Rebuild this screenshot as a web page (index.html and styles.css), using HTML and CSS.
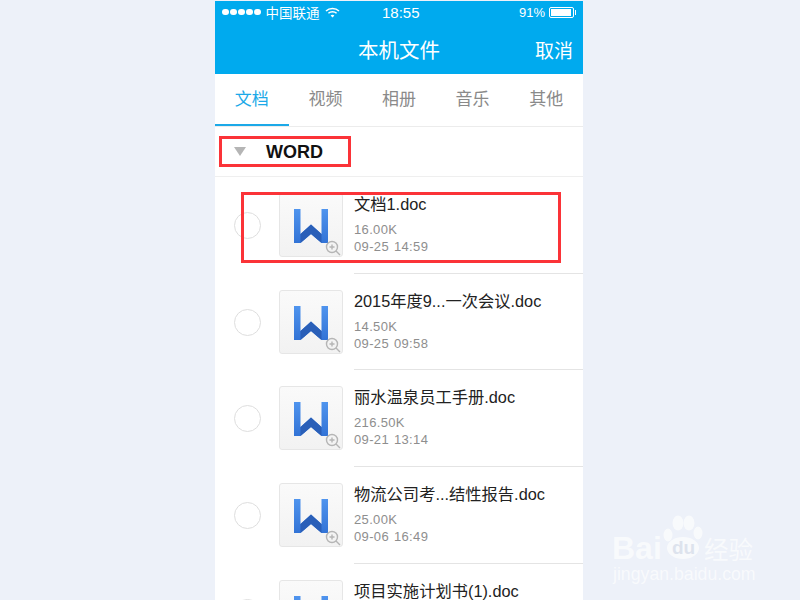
FILE: index.html
```html
<!DOCTYPE html>
<html lang="zh-CN">
<head>
    <meta charset="UTF-8">
    <title>本机文件</title>
    <link rel="stylesheet" href="styles.css">
</head>
<body>
    <svg class="defs" width="0" height="0">
        <defs>
            <linearGradient id="leg" x1="0" y1="0" x2="0" y2="1">
                <stop offset="0" stop-color="#4f94ee"/>
                <stop offset="1" stop-color="#3273d6"/>
            </linearGradient>
        </defs>
    </svg>

    <div class="phone">
        <div class="top">
            <div class="status">
                <div class="carrier">
                    <span class="dots"><i></i><i></i><i></i><i></i><i></i></span>
                    <span>中国联通</span>
                    <svg class="wifi" width="15" height="11" viewBox="0 0 15 11">
                        <path d="M1 4 C4.5 0.6 10.5 0.6 14 4" fill="none" stroke="#fff" stroke-width="1.5"/>
                        <path d="M3.4 6.3 C5.6 4.2 9.4 4.2 11.6 6.3" fill="none" stroke="#fff" stroke-width="1.5"/>
                        <path d="M5.6 8.4 C6.7 7.4 8.3 7.4 9.4 8.4 L7.5 10.4 Z" fill="#fff"/>
                    </svg>
                </div>
                <div class="time">18:55</div>
                <div class="power">
                    <span>91%</span>
                    <span class="battery"><span class="level"></span></span>
                </div>
            </div>
            <div class="nav">
                <div class="nav-title">本机文件</div>
                <div class="nav-cancel">取消</div>
            </div>
        </div>

        <div class="tabs">
            <div class="tab active">文档</div>
            <div class="tab">视频</div>
            <div class="tab">相册</div>
            <div class="tab">音乐</div>
            <div class="tab">其他</div>
        </div>

        <div class="group">
            <span class="arrow"></span>
            <span class="group-name">WORD</span>
            <div class="mark mark-group"></div>
        </div>

        <div class="row">
            <span class="radio"></span>
            <div class="thumb">
                <svg class="w" width="34" height="34" viewBox="0 0 34 34"><path d="M0 0H6.5V25L17 15.5L27.5 25V0H34V34H27.5L17 25L6.5 34H0Z" fill="url(#leg)"/><path d="M6.5 25L17 15.5L27.5 25V34L17 25L6.5 34Z" fill="#2a5fb8"/></svg>
                <svg class="zoom" width="16" height="16" viewBox="0 0 16 16"><circle cx="7" cy="7" r="5.5" fill="none" stroke="#b5b5b5" stroke-width="1.4"/><path d="M4.5 7H9.5M7 4.5V9.5M11 11L15 15" stroke="#b5b5b5" stroke-width="1.4" fill="none"/></svg>
            </div>
            <div class="info">
                <div class="name">文档1.doc</div>
                <div class="meta">16.00K</div>
                <div class="meta">09-25 14:59</div>
            </div>
            <div class="mark mark-row"></div>
        </div>

        <div class="row">
            <span class="radio"></span>
            <div class="thumb">
                <svg class="w" width="34" height="34" viewBox="0 0 34 34"><path d="M0 0H6.5V25L17 15.5L27.5 25V0H34V34H27.5L17 25L6.5 34H0Z" fill="url(#leg)"/><path d="M6.5 25L17 15.5L27.5 25V34L17 25L6.5 34Z" fill="#2a5fb8"/></svg>
                <svg class="zoom" width="16" height="16" viewBox="0 0 16 16"><circle cx="7" cy="7" r="5.5" fill="none" stroke="#b5b5b5" stroke-width="1.4"/><path d="M4.5 7H9.5M7 4.5V9.5M11 11L15 15" stroke="#b5b5b5" stroke-width="1.4" fill="none"/></svg>
            </div>
            <div class="info">
                <div class="name">2015年度9...一次会议.doc</div>
                <div class="meta">14.50K</div>
                <div class="meta">09-25 09:58</div>
            </div>
        </div>

        <div class="row">
            <span class="radio"></span>
            <div class="thumb">
                <svg class="w" width="34" height="34" viewBox="0 0 34 34"><path d="M0 0H6.5V25L17 15.5L27.5 25V0H34V34H27.5L17 25L6.5 34H0Z" fill="url(#leg)"/><path d="M6.5 25L17 15.5L27.5 25V34L17 25L6.5 34Z" fill="#2a5fb8"/></svg>
                <svg class="zoom" width="16" height="16" viewBox="0 0 16 16"><circle cx="7" cy="7" r="5.5" fill="none" stroke="#b5b5b5" stroke-width="1.4"/><path d="M4.5 7H9.5M7 4.5V9.5M11 11L15 15" stroke="#b5b5b5" stroke-width="1.4" fill="none"/></svg>
            </div>
            <div class="info">
                <div class="name">丽水温泉员工手册.doc</div>
                <div class="meta">216.50K</div>
                <div class="meta">09-21 13:14</div>
            </div>
        </div>

        <div class="row">
            <span class="radio"></span>
            <div class="thumb">
                <svg class="w" width="34" height="34" viewBox="0 0 34 34"><path d="M0 0H6.5V25L17 15.5L27.5 25V0H34V34H27.5L17 25L6.5 34H0Z" fill="url(#leg)"/><path d="M6.5 25L17 15.5L27.5 25V34L17 25L6.5 34Z" fill="#2a5fb8"/></svg>
                <svg class="zoom" width="16" height="16" viewBox="0 0 16 16"><circle cx="7" cy="7" r="5.5" fill="none" stroke="#b5b5b5" stroke-width="1.4"/><path d="M4.5 7H9.5M7 4.5V9.5M11 11L15 15" stroke="#b5b5b5" stroke-width="1.4" fill="none"/></svg>
            </div>
            <div class="info">
                <div class="name">物流公司考...结性报告.doc</div>
                <div class="meta">25.00K</div>
                <div class="meta">09-06 16:49</div>
            </div>
        </div>

        <div class="row">
            <span class="radio"></span>
            <div class="thumb">
                <svg class="w" width="34" height="34" viewBox="0 0 34 34"><path d="M0 0H6.5V25L17 15.5L27.5 25V0H34V34H27.5L17 25L6.5 34H0Z" fill="url(#leg)"/><path d="M6.5 25L17 15.5L27.5 25V34L17 25L6.5 34Z" fill="#2a5fb8"/></svg>
            </div>
            <div class="info">
                <div class="name">项目实施计划书(1).doc</div>
            </div>
        </div>
    </div>

    <div class="watermark">
        <svg class="paw" width="50" height="50" viewBox="0 0 50 50">
            <ellipse cx="16" cy="9" rx="5.5" ry="7.5" fill="#fff"/>
            <ellipse cx="27" cy="9" rx="5.5" ry="7.5" fill="#fff"/>
            <ellipse cx="36" cy="19" rx="4.5" ry="6.5" fill="#fff"/>
            <ellipse cx="6" cy="21" rx="4.5" ry="6.5" fill="#fff"/>
            <ellipse cx="21" cy="34" rx="16" ry="11" fill="#fff"/>
        </svg>
        <span class="wm-bai">Bai</span>
        <span class="wm-du">du</span>
        <span class="wm-cn">经验</span>
        <span class="wm-url">jingyan.baidu.com</span>
    </div>
</body>
</html>
```

FILE: styles.css
```css
body {
    margin: 0;
    height: 600px;
    overflow: hidden;
    position: relative;
    background: #edf1f9;
    font-family: "Liberation Sans", "Noto Sans CJK SC", sans-serif;
}
.defs {
    position: absolute;
}
.phone {
    width: 368px;
    height: 599px;
    margin: 1px 0 0 215px;
    background: #fff;
    overflow: hidden;
}
.top {
    background: #00aaee;
    color: #fff;
    height: 73px;
}
.status {
    height: 22px;
    display: flex;
    align-items: center;
    justify-content: space-between;
    padding: 0 7px;
    font-size: 13px;
    position: relative;
}
.carrier {
    display: flex;
    align-items: center;
    gap: 5px;
    font-size: 13.5px;
}
.dots {
    display: flex;
    gap: 1.5px;
}
.dots i {
    width: 6.5px;
    height: 6.5px;
    border-radius: 50%;
    background: #fff;
}
.time {
    position: absolute;
    left: 167px;
    font-size: 15px;
}
.power {
    display: flex;
    align-items: center;
    gap: 4px;
}
.battery {
    display: block;
    width: 25px;
    height: 11px;
    margin-right: 2px;
    border: 1px solid #fff;
    border-radius: 2px;
    padding: 1px;
    box-sizing: border-box;
    position: relative;
}
.battery::after {
    content: "";
    position: absolute;
    right: -3px;
    top: 2px;
    width: 1.5px;
    height: 5px;
    background: #fff;
}
.level {
    display: block;
    width: 20px;
    height: 7px;
    background: #fff;
}
.nav {
    height: 51px;
    padding-top: 1px;
    box-sizing: border-box;
    display: flex;
    align-items: center;
    justify-content: center;
    position: relative;
}
.nav-title {
    font-size: 20.5px;
}
.nav-cancel {
    position: absolute;
    right: 10px;
    font-size: 19px;
}
.tabs {
    display: flex;
    height: 52px;
    border-bottom: 1px solid #ececec;
}
.tab {
    flex: 1;
    text-align: center;
    line-height: 52px;
    font-size: 17px;
    color: #8a8a8a;
}
.tab.active {
    color: #1ca9e8;
    border-bottom: 2px solid #1ca9e8;
    height: 50px;
}
.group {
    height: 49px;
    display: flex;
    align-items: center;
    border-bottom: 1px solid #efefef;
    position: relative;
}
.arrow {
    width: 0;
    height: 0;
    margin-left: 19px;
    border-left: 6px solid transparent;
    border-right: 6px solid transparent;
    border-top: 9px solid #b5b5b5;
}
.group-name {
    margin-left: 20px;
    padding-top: 2px;
    font-size: 18px;
    font-weight: bold;
    color: #111;
}
.mark {
    position: absolute;
    border: 3px solid #fb3338;
    box-sizing: border-box;
}
.mark-group {
    left: 4px;
    top: 9px;
    width: 132px;
    height: 31px;
}
.mark-row {
    left: 26px;
    top: 15px;
    width: 320px;
    height: 71px;
}
.row {
    height: 96.67px;
    display: flex;
    align-items: flex-start;
    position: relative;
    box-sizing: border-box;
}
.radio {
    width: 25px;
    height: 25px;
    margin: 35px 0 0 19px;
    border: 1px solid #dedede;
    border-radius: 50%;
    flex: none;
}
.thumb {
    width: 62px;
    height: 62px;
    margin: 16px 0 0 18px;
    flex: none;
    position: relative;
    border: 1px solid #e6e6e6;
    border-radius: 3px;
    background: linear-gradient(#fafafa, #f2f2f2);
}
.w {
    position: absolute;
    left: 14px;
    top: 15px;
}
.zoom {
    position: absolute;
    right: 1px;
    bottom: 0;
}
.info {
    margin-left: 11px;
    flex: 1;
    height: 100%;
    border-bottom: 1px solid #e4e4e4;
    box-sizing: border-box;
    padding-top: 17px;
}
.name {
    font-size: 16.3px;
    line-height: 20px;
    color: #222;
    margin-bottom: 7px;
}
.meta {
    font-size: 13px;
    line-height: 17px;
    color: #8e8e8e;
    letter-spacing: .35px;
    word-spacing: 1px;
}
.watermark {
    position: absolute;
    left: 612px;
    top: 514px;
    width: 170px;
    height: 76px;
    color: #fff;
    opacity: .65;
}
.paw {
    position: absolute;
    left: 50px;
    top: 0;
}
.watermark span {
    position: absolute;
    white-space: nowrap;
}
.wm-bai {
    left: 0;
    top: 16px;
    font-size: 32px;
    font-weight: bold;
}
.wm-du {
    left: 60px;
    top: 23px;
    font-size: 19px;
    font-weight: bold;
    color: #d6dce8;
}
.wm-cn {
    left: 92px;
    top: 17px;
    font-size: 24.5px;
}
.wm-url {
    left: 1px;
    top: 50px;
    font-size: 17.7px;
}
```
